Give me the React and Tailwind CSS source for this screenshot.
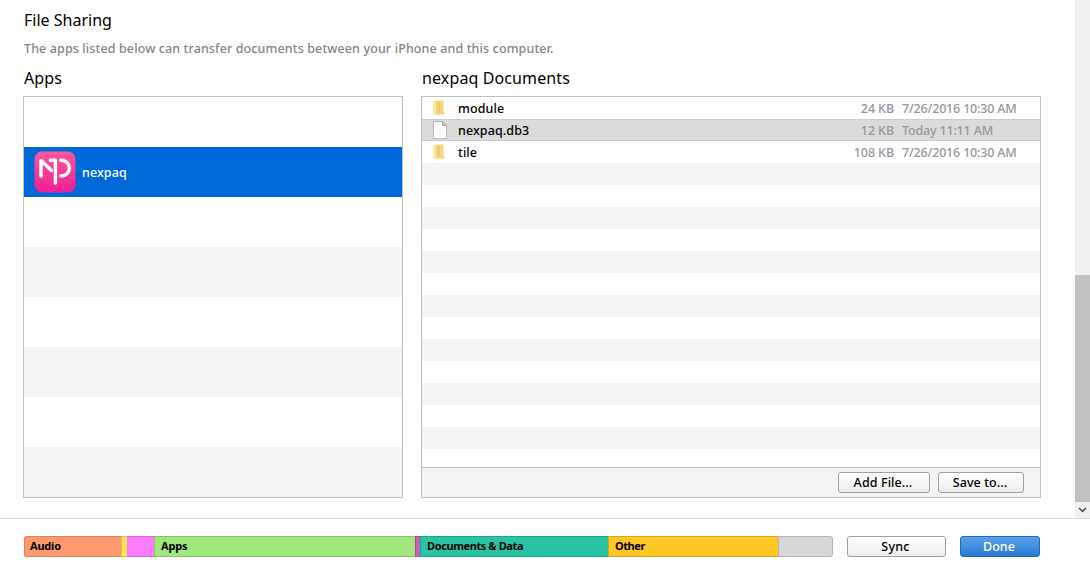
import React from "react";

const files = [
  { name: "module", kind: "folder", size: "24 KB", date: "7/26/2016 10:30 AM" },
  { name: "nexpaq.db3", kind: "file", size: "12 KB", date: "Today 11:11 AM" },
  { name: "tile", kind: "folder", size: "108 KB", date: "7/26/2016 10:30 AM" },
];

const usage = [
  { label: "Audio", cls: "w-[97px] bg-[#ff9a70] border-[#d9835f] border-l pl-[5px] rounded-l-[3px]", text: "tracking-[-0.2px]" },
  { label: "", cls: "w-[6px] bg-[#ffe451] border-[#dcc446] border-l", text: "" },
  { label: "", cls: "w-[27px] bg-[#fb7cfc] border-[#d56ad6]", text: "" },
  { label: "Apps", cls: "w-[261px] bg-[#a0e87c] border-[#84c565] border-l pl-[6px]", text: "tracking-[-0.2px]" },
  { label: "", cls: "w-[5px] bg-[#c95fb7] border-[#a44d95] border-l", text: "" },
  { label: "Documents & Data", cls: "w-[188px] bg-[#29c4a4] border-[#20a087] border-l pl-[6px]", text: "tracking-[-0.4px]" },
  { label: "Other", cls: "w-[170px] bg-[#ffc627] border-[#d5a620] border-l pl-[6px]", text: "tracking-[-0.45px]" },
  { label: "", cls: "w-[55px] bg-[#d8d8d8] border-[#b5b5b5] border-x rounded-r-[3px]", text: "" },
];

function AppIcon() {
  return (
    <svg width="42" height="42" viewBox="0 0 42 42" className="shrink-0">
      <defs>
        <linearGradient id="pink" x1="0" y1="0" x2="0" y2="1">
          <stop offset="0" stopColor="#fb5a9f" />
          <stop offset="1" stopColor="#ee1e93" />
        </linearGradient>
      </defs>
      <rect x="0.5" y="0.5" width="41" height="41" rx="7.5" fill="url(#pink)" />
      <g fill="none" stroke="#fff" strokeWidth="3.4" strokeLinecap="round" strokeLinejoin="round">
        <path d="M7 25.2V9.5L17.5 19.5" />
        <path d="M16.3 9.2H21.4V32" />
        <path d="M26.8 9.2H27.4a7.9 7.9 0 0 1 0 15.8H26.8" />
      </g>
    </svg>
  );
}

function FolderIcon() {
  return (
    <svg width="12" height="16" viewBox="0 0 12 16" className="ml-px">
      <path d="M0.5 1h5v13.5h-5z" fill="#f6dc8c" />
      <path d="M3 0.5h7.5v11.5h1v2.5H3z" fill="#f6d67d" />
      <path d="M4.5 2h2.5v10H4.5z" fill="#edca6c" />
      <path d="M0.5 13.5L3 15.5V2.5L0.5 1z" fill="#fbe7a4" />
    </svg>
  );
}

function FileIcon() {
  return (
    <svg width="14" height="18" viewBox="0 0 14 18" className="ml-px">
      <path d="M.5.5h9l4 4v13H.5z" fill="#fbfbfb" stroke="#b8b8b8" />
      <path d="M9.5.5v4h4z" fill="#d5d5d5" stroke="#999999" strokeWidth=".8" />
    </svg>
  );
}

function Button({ children, className }) {
  return (
    <button className={"flex h-[21px] items-center justify-center rounded-[3px] border pt-0.5 pr-0.5 text-[12.5px] font-medium leading-none " + className}>
      {children}
    </button>
  );
}

const plain = "border-[#a0a0a0] bg-linear-to-b from-white to-[#ececec] text-black";

export default function App() {
  return (
    <div className="flex h-[568px] w-[1090px] flex-col overflow-hidden bg-white font-['Noto_Sans',sans-serif] text-black">
      <div className="flex h-[518px]">
        <main className="flex-1 pl-[23px]">
          <h1 className="ml-px pt-2 text-base leading-6"><span>File Sharing</span></h1>
          <p className="ml-px mt-1.5 pt-px text-[12.5px] font-medium leading-5 tracking-[0.12px] text-[#858585]"><span>The apps listed below can transfer documents between your iPhone and this computer.</span></p>
          <div className="mt-[7px] flex gap-[18px]">
            <section className="w-[380px]">
              <h2 className="ml-px h-[30px] text-base leading-6 tracking-[0.1px]"><span>Apps</span></h2>
              <div className="flex h-[402px] flex-col border border-[#c0c0c0]">
                <div className="h-[50px]" />
                <div className="flex h-[50px] items-center gap-1.5 bg-[#0069d9] pl-2.5 text-[12.5px] font-medium tracking-[0.1px] text-white">
                  <AppIcon />
                  <span className="pt-0.5">nexpaq</span>
                </div>
                {[0, 1, 2, 3, 4, 5].map((i) => (
                  <div key={i} className="h-[50px] odd:bg-white even:bg-[#f4f4f4]" />
                ))}
              </div>
            </section>
            <section className="w-[620px]">
              <h2 className="ml-px h-[30px] text-base leading-6 tracking-[0.12px]"><span>nexpaq Documents</span></h2>
              <div className="flex h-[402px] flex-col border border-[#c0c0c0]">
                <div className="h-[370px] overflow-hidden">
                  {files.map((f) => (
                    <div key={f.name} className={"flex h-[22px] items-center pl-2.5 text-[12.5px] font-medium leading-none " + (f.kind === "file" ? "border-y border-[#cdcdcd] bg-[#dbdbdb]" : "bg-white")}>
                      <div className="w-[26px]">{f.kind === "folder" ? <FolderIcon /> : <FileIcon />}</div>
                      <span className="pt-0.5 tracking-[0.1px]">{f.name}</span>
                      <span className="ml-auto pr-2 pt-0.5 tracking-[-0.1px] text-[#96969b]">{f.size}</span>
                      <span className="w-[138px] pt-0.5 tracking-[-0.18px] text-[#96969b]"><span>{f.date}</span></span>
                    </div>
                  ))}
                  {Array.from({ length: 14 }, (_, i) => (
                    <div key={i} className="h-[22px] odd:bg-white even:bg-[#f4f4f4]" />
                  ))}
                </div>
                <div className="flex h-[30px] items-center justify-end gap-2 border-t border-[#c0c0c0] bg-[#f4f4f4] pr-4">
                  <Button className={"w-[92px] tracking-[0.1px] " + plain}>Add File...</Button>
                  <Button className={"w-[86px] tracking-[0.1px] " + plain}>Save to...</Button>
                </div>
              </div>
            </section>
          </div>
        </main>
        <div className="flex w-[15px] flex-col justify-end bg-[#f0f0f0]">
          <div className="h-[227px] bg-[#c1c1c1]" />
          <div className="flex h-4 items-center justify-center">
            <svg width="9" height="6" viewBox="0 0 9 6"><path d="M1 1l3.5 3.3L8 1" fill="none" stroke="#505050" strokeWidth="1.6" /></svg>
          </div>
        </div>
      </div>
      <footer className="flex h-[50px] items-start border-t border-[#dcdcdc] pl-6 pt-[17px]">
        <div className="flex h-[21px]">
          {usage.map((u, i) => (
            <div key={i} className={"flex items-center border-y pb-0.5 text-[11px] font-bold leading-none " + u.cls}>
              {u.label && <span className={u.text}>{u.label}</span>}
            </div>
          ))}
        </div>
        <Button className={"ml-3.5 w-[99px] tracking-[0.2px] " + plain}>Sync</Button>
        <Button className="ml-3.5 w-[80px] border-[#2765ac] bg-linear-to-b from-[#57a3ea] to-[#2b78d3] text-white">Done</Button>
      </footer>
    </div>
  );
}
